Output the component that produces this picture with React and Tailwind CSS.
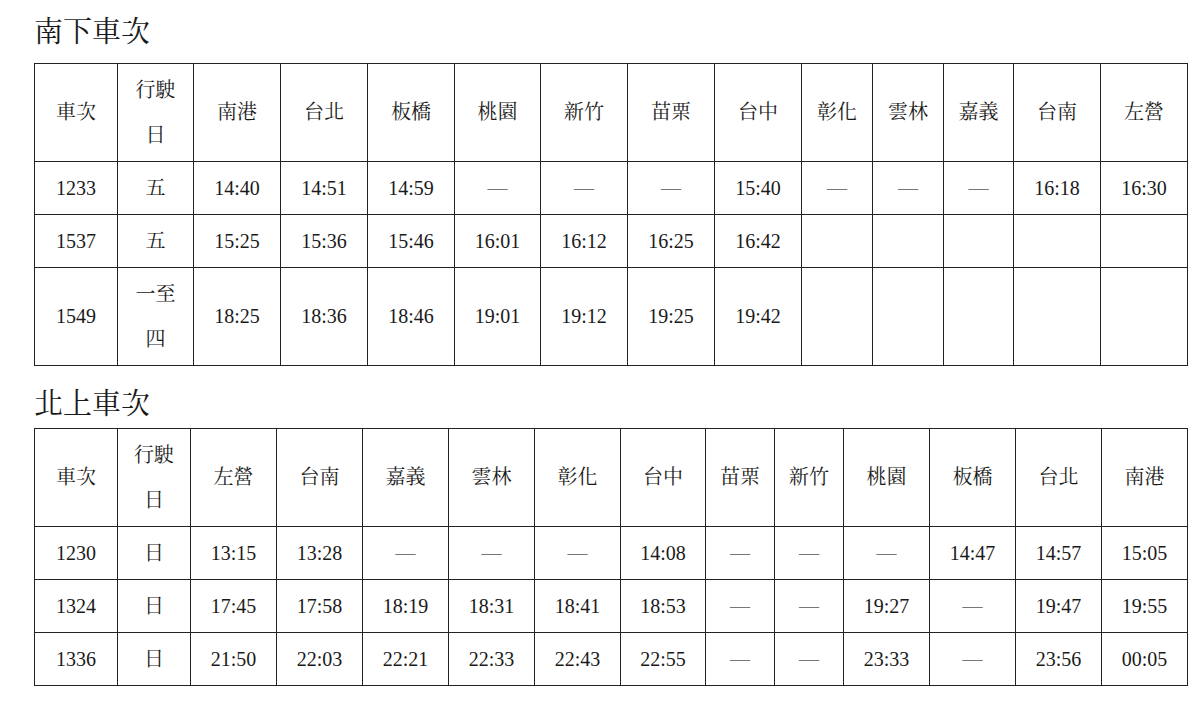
import React from 'react';

const font = { fontFamily: '"Liberation Serif", "Noto Serif CJK TC", "Noto Sans CJK TC", serif' };

// southbound timetable
const south = {
  title: '南下車次',
  widths: ['w-[83px]', 'w-[76px]', 'w-[87px]', 'w-[87px]', 'w-[87px]', 'w-[86px]', 'w-[87px]', 'w-[87px]', 'w-[87px]', 'w-[71px]', 'w-[71px]', 'w-[70px]', 'w-[87px]', 'w-[87px]'],
  stations: ['南港', '台北', '板橋', '桃園', '新竹', '苗栗', '台中', '彰化', '雲林', '嘉義', '台南', '左營'],
  rows: [
    { no: '1233', day: ['五'], times: ['14:40', '14:51', '14:59', '—', '—', '—', '15:40', '—', '—', '—', '16:18', '16:30'] },
    { no: '1537', day: ['五'], times: ['15:25', '15:36', '15:46', '16:01', '16:12', '16:25', '16:42', '', '', '', '', ''] },
    { no: '1549', day: ['一至', '四'], times: ['18:25', '18:36', '18:46', '19:01', '19:12', '19:25', '19:42', '', '', '', '', ''] },
  ],
};

// northbound timetable
const north = {
  title: '北上車次',
  widths: ['w-[83px]', 'w-[73px]', 'w-[86px]', 'w-[86px]', 'w-[86px]', 'w-[86px]', 'w-[86px]', 'w-[85px]', 'w-[69px]', 'w-[69px]', 'w-[86px]', 'w-[86px]', 'w-[86px]', 'w-[86px]'],
  stations: ['左營', '台南', '嘉義', '雲林', '彰化', '台中', '苗栗', '新竹', '桃園', '板橋', '台北', '南港'],
  rows: [
    { no: '1230', day: ['日'], times: ['13:15', '13:28', '—', '—', '—', '14:08', '—', '—', '—', '14:47', '14:57', '15:05'] },
    { no: '1324', day: ['日'], times: ['17:45', '17:58', '18:19', '18:31', '18:41', '18:53', '—', '—', '19:27', '—', '19:47', '19:55'] },
    { no: '1336', day: ['日'], times: ['21:50', '22:03', '22:21', '22:33', '22:43', '22:55', '—', '—', '23:33', '—', '23:56', '00:05'] },
  ],
};

const cell = 'border border-[#222] text-center align-middle px-0 py-[3.5px] leading-[45px] text-[20px] font-normal';

const Lines = ({ items }) =>
  items.map((t, i) => (
    <React.Fragment key={i}>
      {i > 0 && <br />}
      {t}
    </React.Fragment>
  ));

const Timetable = ({ data }) => (
  <table className="table-fixed border-collapse w-[1153px]">
    <colgroup>
      {data.widths.map((w, i) => (
        <col key={i} className={w} />
      ))}
    </colgroup>
    <thead>
      <tr>
        <th className={cell}>車次</th>
        <th className={cell}>
          行駛
          <br />日
        </th>
        {data.stations.map((s) => (
          <th key={s} className={cell}>
            {s}
          </th>
        ))}
      </tr>
    </thead>
    <tbody>
      {data.rows.map((r) => (
        <tr key={r.no}>
          <td className={cell}>{r.no}</td>
          <td className={cell}>
            <Lines items={r.day} />
          </td>
          {r.times.map((t, i) => (
            <td key={i} className={`${cell} ${t === '—' ? 'text-[#777]' : ''}`}>
              {t}
            </td>
          ))}
        </tr>
      ))}
    </tbody>
  </table>
);

export default function App() {
  return (
    <div className="bg-white min-h-[708px] w-[1200px] text-[#1a1a1a] pl-[34px] pt-[12px]" style={font}>
      <h2 className="text-[29px] leading-[40px] font-normal mb-[11px]">{south.title}</h2>
      <Timetable data={south} />
      <h2 className="text-[29px] leading-[40px] font-normal mt-[18px] mb-[4px]">{north.title}</h2>
      <Timetable data={north} />
    </div>
  );
}
